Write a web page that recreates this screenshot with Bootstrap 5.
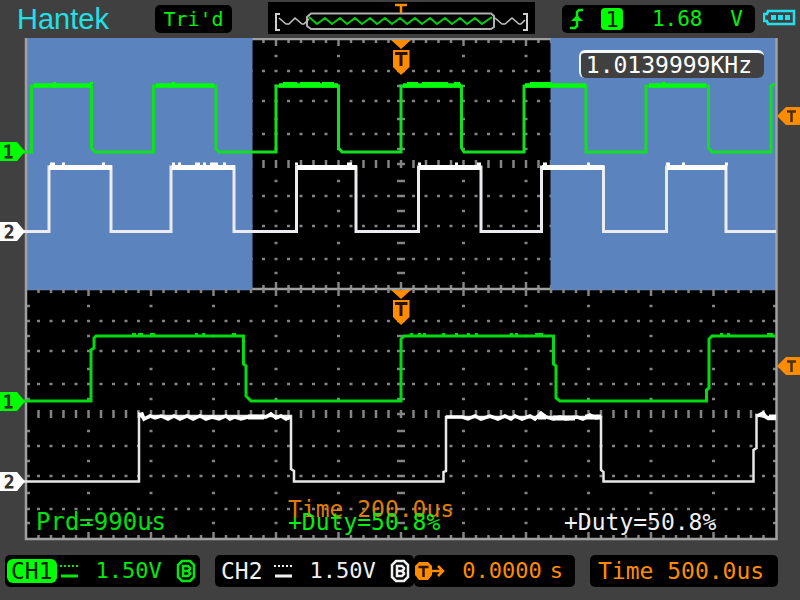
<!DOCTYPE html>
<html lang="en">
<head>
<meta charset="utf-8">
<meta name="viewport" content="width=device-width, initial-scale=1">
<title>Hantek oscilloscope</title>
<link href="https://cdn.jsdelivr.net/npm/bootstrap@5.3.0/dist/css/bootstrap.min.css" rel="stylesheet">
<style>
  :root { --trace: #00f010; --orange: #ff8c00; --panel: #404040; }
  body { background: var(--panel); font-family: "DejaVu Sans Mono", monospace; font-size: 22px; line-height: 24px; color: #f0f0f0; }
  .scope-top { display: grid; grid-template-columns: 155fr 77fr 36fr 267fr 27fr 193fr 45fr; height: 38px; }
  .scope-top > * { min-width: 0; }
  .brand { font: 29px/38px "Liberation Sans", Arial, sans-serif; color: #20e0e8; padding-left: 17px; }
  .readout { background: #000; border-radius: 5px; white-space: nowrap; }
  .top-readout { height: 28px; margin-top: 5px; color: var(--trace); }
  .state { font-size: 20px; }
  .level { font-size: 21px; }
  .memory { margin-top: 2px; height: 32px; background: #000; }
  .plot text { font: 18px "DejaVu Sans Mono", monospace; text-anchor: middle; }
  .plot .flag { font-size: 17px; fill: #303030; stroke: #303030; }
  .freq { top: 12px; right: 4.5%; height: 28px; font-size: 23px; color: #fff; background: var(--panel); border-top: 3px solid #f4f8ff; border-left: 2px solid #e8f0fa; border-radius: 6px; padding: 0 12px 0 5px; }
  .meas { bottom: 8px; font-size: 23px; white-space: nowrap; }
  .m-period { left: 4.5%; font-size: 24px; color: #00e010; }
  .m-duty1 { left: 36%; color: #00f010; }
  .m-duty2 { left: 70.5%; }
  .m-time { left: 36%; bottom: 21px; color: #e07c08; }
  .scope-bottom { display: grid; grid-template-columns: 195fr 15fr 199fr 161fr 15fr 188fr; margin: 13px 22px 12px 5px; }
  .scope-bottom > * { min-width: 0; height: 32px; }
  .ch-tag { font-size: 23px; line-height: 24px; margin-left: 2px; }
  .ch-on { background: #00ff00; color: #001800; border-radius: 6px; padding: 0 4px; }
  .ch-off { padding: 0 4px; margin-right: 4px; }
  .green { color: #00e810; }
  .orange { color: var(--orange); }
  .timebase { font-size: 23px; }
  .coupling { margin: 0 16px 0 3px; }
  .unit { padding: 0 12px 0 8px; }
  svg { display: block; flex-shrink: 0; }
</style>
</head>
<body>
<header class="scope-top">
  <div class="brand">Hantek</div>
  <div class="readout top-readout state d-flex align-items-center justify-content-center">Tri'd</div>
  <span></span>
  <div class="memory">
    <svg width="100%" height="32" viewBox="0 0 267 32" fill="none" role="img" aria-label="Memory position">
      <path d="M12 12H8V28H12M255 12H259V28H255" stroke="#d0d0d0" stroke-width="2"/>
      <path d="M43 11.500H223L226 14V25L223 27H43L39 24V15Z" stroke="#b0b0b0" stroke-width="2"/>
      <path d="M11 16L18 22H21L27 16L34 22H36L41 17M227 16L234 22H237L244 16L251 22H253L257 18" stroke="#c0c0c0" stroke-width="1.600"/>
      <path d="M41 15L49 22L57 16L64 22L72 16L79 22L87 16L94 22L102 16L109 22L117 16L124 22L132 16L139 22L147 16L154 22L162 16L169 22L177 16L184 22L192 16L199 22L207 16L214 22L224 15" stroke="#00d010" stroke-width="2"/>
      <path d="M127 3H139M133 2V11" stroke="#ff8c00" stroke-width="2.500"/>
    </svg>
  </div>
  <span></span>
  <div class="readout top-readout level d-flex align-items-center">
    <svg class="ms-2" width="14" height="24" viewBox="0 0 14 24" fill="none" stroke="#00f010" stroke-width="2.500" aria-hidden="true"><path d="M13 3H9L7 5V19L5 21H0"/><path d="M1 14L7 8L13 14Z" fill="#00f010" stroke="none"/></svg>
    <svg class="ms-3" width="24" height="24" viewBox="0 0 24 24" aria-label="Source 1"><rect x="1" y="1" width="22" height="22" rx="4" fill="#00ff00"/><text x="12" y="20" text-anchor="middle" font-size="22" fill="#001800">1</text></svg>
    <span class="ms-auto me-auto">1.68</span><span class="pe-2 me-1">V</span>
  </div>
  <div class="d-flex ps-2 pt-1">
    <svg class="mt-1" width="33" height="18" viewBox="0 0 33 18" fill="none" aria-label="Battery"><path d="M5 3H31V16H5L4 13H1V6H4Z" stroke="#20e0f0" stroke-width="2.500"/><path d="M8 7H13V12H8ZM15 7H20V12H15ZM22 7H27V12H22Z" fill="#20e0f0"/></svg>
  </div>
</header>

<main class="position-relative">
  <svg class="plot w-100 h-auto" viewBox="0 38 800 504" fill="none" role="img" aria-label="Two channel waveforms, main view and zoomed view">
    <rect x="26" y="38" width="751" height="502" fill="#000"/>
    <g id="grid-main" stroke="#848484"></g>
    <path d="M26 39H776M26 289H776" stroke="#a0a0a0" stroke-width="2.500"/>
    <path d="M27 38H252.500V290H27ZM550.500 38H776V290H550.500Z" fill="#5b84be"/>
    <g id="grid-zoom" stroke="#848484"></g>
    <path d="M26 38V539H776.500V38" stroke="#a0a0a0" stroke-width="2.500"/>

    <g stroke="#10e020" stroke-width="3">
      <path d="M23 152H31.500V86H91.500V148L95 152H153.500V86H216V149L219 152H276V86H338.500V148L342 152H401V86H461.500V148L464 152H524V86H586V152H646V86H708.500V148L712 152H771V86L775 84"/>
      <path d="M34 85.500H91M156 85.500H214M279 85.500H338M403 85.500H461M525 85.500H586M649 85.500H706" stroke="#00ff08" stroke-width="4.500"/>
      <path d="M53 83H56M172 83H175M283 83H297M300 83H320M322 83H334M407 83H418M422 83H448M454 83H460M530 83H552M662 83H665M90 83H93" stroke="#00ff08" stroke-width="2"/>
    </g>
    <g stroke="#ececf0" stroke-width="3">
      <path d="M23 231.500H49V167H111V231.500H171V167H234V231.500H296.500V167H356V231.500H418.500V167H481V231.500H541.500V167H603.500V231.500H666.500V167H726V231.500H776"/>
      <path d="M49 167.500H112M172 167.500H235M297 167.500H357M419 167.500H481M542 167.500H604M667 167.500H727" stroke="#fff" stroke-width="5"/>
      <path d="M50 164H55M62 164H65M102 164H105M172 164H175M178 164H181M195 164H200M203 164H206M210 164H218M223 164H226M295 164H298M347 164H352M418 164H421M455 164H458M477 164H481M543 164H547M587 164H590M666 164H670M682 164H685M725 164H728" stroke="#fff" stroke-width="3"/>
    </g>
    <g stroke="#00dc10" stroke-width="3">
      <path d="M23 401H91V350L94 348V338L96 336H243.500V364L246 366V396L251 401H401V339L404 336H553.500V364L556 366V398L560 401H706.500V390L709 388V339L712 336H776"/>
      <path d="M132 334H136M138 334H143M150 334H155M195 334H198M202 334H205M232 334H236M410 334H413M418 334H421M423 334H426M442 334H445M455 334H458M467 334H470M475 334H478M510 334H513M515 334H518M535 334H543M720 334H723M727 334H730M767 334H773" stroke-width="2"/>
    </g>
    <g stroke="#e8e8e8" stroke-width="2.500">
      <path d="M23 481.500H139V414L144 419L152 416H291V469L294 471V481.500H443.500V472L446 471V417H601V470L603.500 472V481.500H753.500V450L756.500 448V415L765 417L768 419H776"/>
      <path d="M139 415L142 414L144 419L150 416L155 418L161 416L168 419L174 416L180 419L187 416L193 419L200 416L206 419L212 417L219 419L226 416L230 419L235 417L241 419L248 417H266L271 414L276 418L281 416L286 419L291 417M446 417H462L468 419L475 416L481 419L490 416L498 419L505 416L511 419L515 416L522 419L530 416L535 419L541 413L546 417L553 419L560 417L566 419L577 417L583 419L590 415L596 418L601 417M757 416L763 413L766 417L769 418H776" stroke="#fff" stroke-width="3.500"/>
      <path d="M248 417H264M538 417H546M553 418H575M585 417H601M769 417H776" stroke="#fff" stroke-width="5"/>
    </g>

    <g id="trig-pos"><path d="M391 40H411L401 49Z M393 50H409.500V67L401 75L393 67Z" fill="#ff8c00"/><path d="M395 53.500H407.500M401 53V66" stroke="#281400" stroke-width="3"/></g>
    <use href="#trig-pos" y="250"/>
    <g id="trig-level"><path d="M777 116L786 107H800V125H786Z" fill="#ff8c00"/><path d="M787 111.500H796M791.500 111V122" stroke="#4a3010" stroke-width="2.500"/></g>
    <use href="#trig-level" y="250"/>
    <g id="ch-flags">
      <path d="M0 142H17L25 151.500L17 161H0Z" fill="#00ff00"/><text class="flag" x="8" y="158">1</text>
      <path d="M0 222H17L25 231.500L17 241H0Z" fill="#fff"/><text class="flag" x="9" y="238">2</text>
    </g>
    <use href="#ch-flags" y="250"/>
  </svg>
  <div class="freq position-absolute">1.0139999KHz</div>
  <span class="meas m-period position-absolute">Prd=990us</span>
  <span class="meas m-time position-absolute">Time 200.0us</span>
  <span class="meas m-duty1 position-absolute">+Duty=50.8%</span>
  <span class="meas m-duty2 position-absolute">+Duty=50.8%</span>
</main>

<footer class="scope-bottom">
  <div class="readout green d-flex align-items-center">
    <span class="ch-tag ch-on">CH1</span>
    <svg class="coupling" width="20" height="16" viewBox="0 0 20 16" stroke="currentColor" aria-label="DC coupling"><path d="M0 3H20" stroke-width="2" stroke-dasharray="2 2"/><path d="M1 13H18" stroke-width="3"/></svg>
    <span>1.50V</span>
    <svg class="ms-auto me-1" width="20" height="24" viewBox="0 0 20 24" fill="none" stroke="currentColor" aria-label="Bandwidth limit"><path d="M6 2H14L18 6V18L14 22H6L2 18V6Z" stroke-width="2.500"/><path d="M7 7H12L14 9V10L12 12L14 14V15L12 17H7ZM7 12H12" stroke-width="2.500"/></svg>
  </div>
  <span></span>
  <div class="readout d-flex align-items-center">
    <span class="ch-tag ch-off">CH2</span>
    <svg class="coupling" width="20" height="16" viewBox="0 0 20 16" stroke="currentColor" aria-label="DC coupling"><path d="M0 3H20" stroke-width="2" stroke-dasharray="2 2"/><path d="M1 13H18" stroke-width="3"/></svg>
    <span>1.50V</span>
    <svg class="ms-auto me-1" width="20" height="24" viewBox="0 0 20 24" fill="none" stroke="currentColor" aria-label="Bandwidth limit"><path d="M6 2H14L18 6V18L14 22H6L2 18V6Z" stroke-width="2.500"/><path d="M7 7H12L14 9V10L12 12L14 14V15L12 17H7ZM7 12H12" stroke-width="2.500"/></svg>
  </div>
  <div class="readout orange d-flex align-items-center">
    <svg width="32" height="20" viewBox="0 0 32 20" fill="none" aria-label="Trigger offset"><path d="M5 1H14L18 5V14L14 19H5L1 14V5Z" fill="#ff8c00"/><path d="M4.500 6H14.500M9.500 6V16" stroke="#281400" stroke-width="2.500"/><path d="M18 10H29M24 5L29 10L24 15" stroke="#ff8c00" stroke-width="2.500"/></svg>
    <span class="ms-auto">0.0000</span><span class="unit">s</span>
  </div>
  <span></span>
  <div class="readout orange timebase d-flex align-items-center ps-2">Time 500.0us</div>
</footer>

<script src="https://cdn.jsdelivr.net/npm/bootstrap@5.3.0/dist/js/bootstrap.bundle.min.js"></script>
<script>
  // Graticule: 12 divisions wide with 5 subdivisions each, 8 divisions high per panel.
  function graticule(id, top) {
    const dots = [], cols = [], ticks = [], wide = [];
    const rows = [32, 62, 95, 157, 187, 220], mids = [17, 47, 80, 110, 142, 172, 204, 234];
    for (let i = 1; i < 60; i++) {
      const x = 26 + i * 12.5, major = i % 5 === 0, len = major ? 7 : 4;
      rows.forEach(y => dots.push(`M${x - 1.5} ${top + y}h3`));
      ticks.push(`M${x} ${top}v${len}`, `M${x} ${top + 250}v${-len}`, `M${x} ${top + 121}v8`);
      if (major) mids.forEach(y => cols.push(`M${x - 1.5} ${top + y}h3`));
    }
    mids.concat(rows).forEach(y => wide.push(`M397 ${top + y}h8`, `M27 ${top + y}h3`, `M773 ${top + y}h3`));
    wide.push(`M397 ${top + 125}h8`);
    document.getElementById(id).innerHTML =
      `<path d="${dots.concat(cols, wide).join('')}" stroke-width="2.500"/>` +
      `<path d="${ticks.join('')}" stroke-width="2.500"/>`;
  }
  graticule('grid-main', 39);
  graticule('grid-zoom', 289);
</script>
</body>
</html>
